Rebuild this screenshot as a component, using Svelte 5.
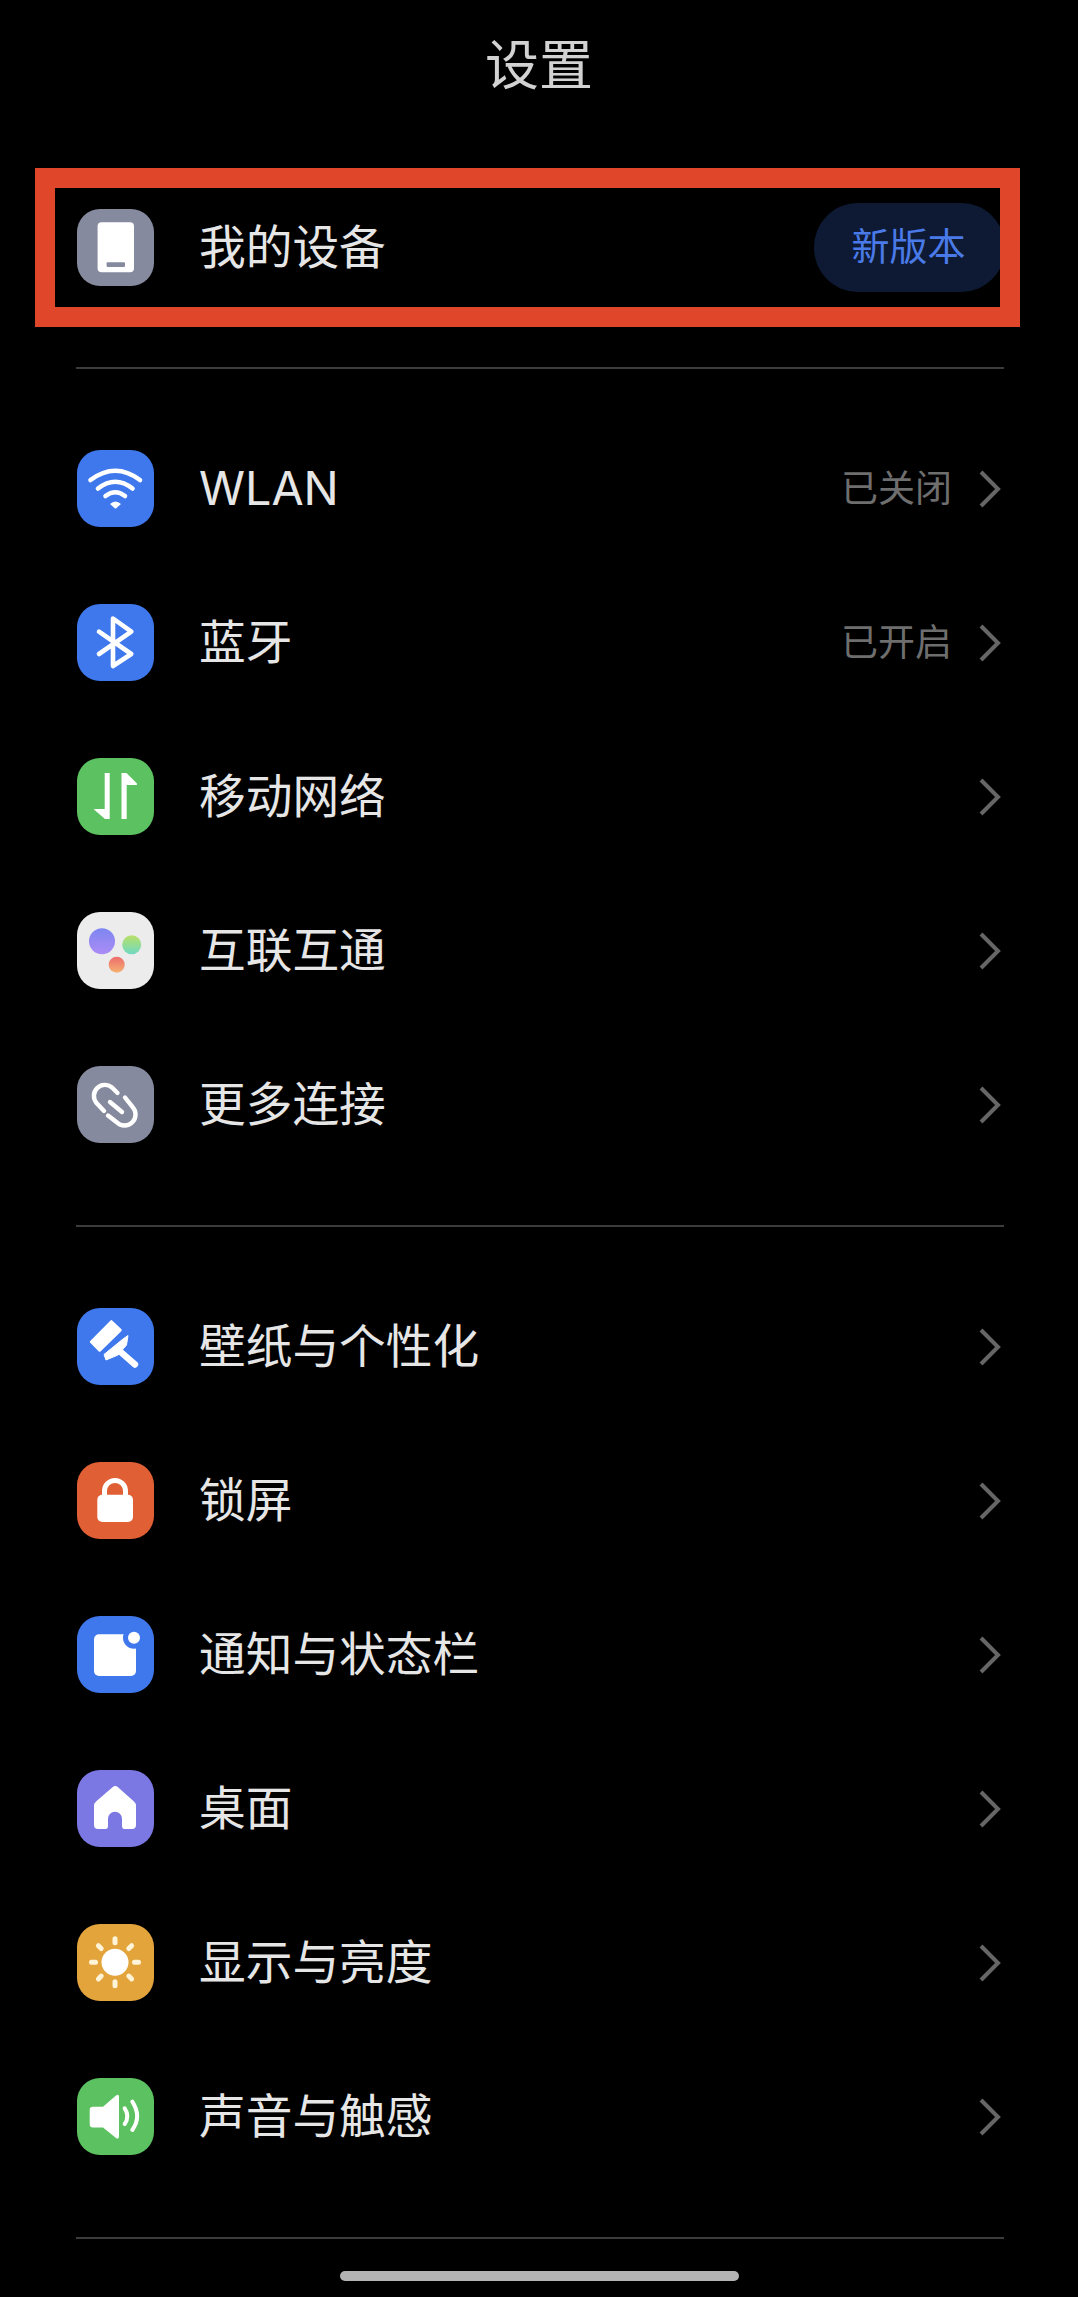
<script>
  const groups = [
    [
      { icon: 'wifi', bg: '#3f78ec', label: 'WLAN', sub: '已关闭' },
      { icon: 'bt', bg: '#3f78ec', label: '蓝牙', sub: '已开启' },
      { icon: 'mobile', bg: '#5cc160', label: '移动网络' },
      { icon: 'link3', bg: '#ececec', label: '互联互通' },
      { icon: 'chain', bg: '#868a9e', label: '更多连接' }
    ],
    [
      { icon: 'brush', bg: '#3f78ec', label: '壁纸与个性化' },
      { icon: 'lock', bg: '#e05f35', label: '锁屏' },
      { icon: 'notify', bg: '#3f78ec', label: '通知与状态栏' },
      { icon: 'home', bg: '#7b78e4', label: '桌面' },
      { icon: 'sun', bg: '#e3a43c', label: '显示与亮度' },
      { icon: 'sound', bg: '#5cc160', label: '声音与触感' }
    ]
  ];

  const rays = [0, 45, 90, 135, 180, 225, 270, 315];
</script>

{#snippet glyph(name)}
  <svg class="glyph" viewBox="0 0 77 77" aria-hidden="true">
    {#if name === 'device'}
      <rect x="20.6" y="13.3" width="36.4" height="50" rx="4" fill="#fff" />
      <rect x="29.6" y="53.3" width="18.4" height="4.6" rx="1" fill="#868a9e" />
    {:else if name === 'wifi'}
      <g fill="none" stroke="#fff" stroke-width="4.6" stroke-linecap="round">
        <path d="M13.5 30Q38.3 11.5 63 30" />
        <path d="M21 38.5Q38.3 25 55.5 38.5" />
        <path d="M28.5 46Q38.3 38.5 48 46" />
      </g>
      <path d="M33 54Q38.5 49 44 54L39.5 58Q38.5 59 37.5 58Z" fill="#fff" />
    {:else if name === 'bt'}
      <path d="M36 62V14.5L54.3 27.7L22 50M22 27.7L54.3 50L36 62" fill="none" stroke="#fff" stroke-width="4.6" stroke-linecap="round" stroke-linejoin="round" />
    {:else if name === 'mobile'}
      <path d="M27.7 15H32.7V61H28L17 51.5V51H27.7Z" fill="#fff" />
      <path d="M44.5 61H49.7V27H60V25.5L49.5 15H44.5Z" fill="#fff" />
    {:else if name === 'link3'}
      <defs>
        <linearGradient id="dot-a" x1="0" y1="0" x2="0" y2="1"><stop offset="0" stop-color="#7d86f0" /><stop offset="1" stop-color="#ac8cf6" /></linearGradient>
        <linearGradient id="dot-b" x1="0" y1="0" x2="0" y2="1"><stop offset="0" stop-color="#b8e066" /><stop offset="1" stop-color="#6fd9c2" /></linearGradient>
        <linearGradient id="dot-c" x1="0" y1="0" x2="0" y2="1"><stop offset="0" stop-color="#ee6a6c" /><stop offset="1" stop-color="#f5b272" /></linearGradient>
      </defs>
      <circle cx="25" cy="29.3" r="13" fill="url(#dot-a)" />
      <circle cx="54.7" cy="32.7" r="9.5" fill="url(#dot-b)" />
      <circle cx="39.7" cy="52.7" r="8" fill="url(#dot-c)" />
    {:else if name === 'chain'}
      <g fill="none" stroke="#fff" stroke-width="4.4" stroke-linecap="round" stroke-linejoin="round">
        <path d="M40.5 27L35 21.5A11 11 0 0 0 19.5 37L27 45" />
        <path d="M31 49.5L39.7 56.3A11 11 0 0 0 55.3 40.7L48 31.5" />
        <path d="M33 36L45 46" />
      </g>
    {:else if name === 'brush'}
      <path d="M13 33.3L33.5 12.5Q34.3 11.7 35.2 12.5L44.5 21.2Q45 22 44.5 23L23.5 43.5Q22.7 44 21.8 43.5L13 34.5Q12.5 34 13 33.3Z" fill="#fff" />
      <path d="M27 46.5L46 31L51 27.5L49.5 37L41 47L29 52Z" fill="#fff" stroke="#fff" stroke-linejoin="round" />
      <path d="M41 41.7L58 56.5" stroke="#fff" stroke-width="6.4" stroke-linecap="round" />
    {:else if name === 'lock'}
      <rect x="20.3" y="32.7" width="35.7" height="27.3" rx="5" fill="#fff" />
      <path d="M27.5 35V29A10.5 10.5 0 0 1 48.5 29V35" fill="none" stroke="#fff" stroke-width="5" />
    {:else if name === 'notify'}
      <rect x="17" y="18.3" width="42" height="41.7" rx="5" fill="#fff" />
      <circle cx="57" cy="21.7" r="11" fill="#3f78ec" />
      <circle cx="57" cy="21.7" r="6" fill="#fff" />
    {:else if name === 'home'}
      <path fill-rule="evenodd" d="M35.5 17.2Q38.3 15 41 17.2L57 31.5Q59 33.3 59 36V55Q59 59 55 59H47.5Q45 59 45 56V48.7A7 7 0 0 0 31 48.7V56Q31 59 28.5 59H21Q17 59 17 55V36Q17 33.3 19 31.5Z" fill="#fff" />
    {:else if name === 'sun'}
      <circle cx="38" cy="38.3" r="13.5" fill="#fff" />
      {#each rays as a}
        <path d="M38 18.8V14.8" transform="rotate({a} 38 38.3)" stroke="#fff4d8" stroke-width="5" stroke-linecap="round" />
      {/each}
    {:else if name === 'sound'}
      <path d="M16 28.7H26L39 17.5Q42 15.5 42 19V58Q42 62 39 60L26 49.5H16Q12.7 49.5 12.7 46V32Q12.7 28.7 16 28.7Z" fill="#fff" />
      <g fill="none" stroke="#fff" stroke-width="4" stroke-linecap="round">
        <path d="M47.7 30.3Q53 38.5 47.7 46" />
        <path d="M55.3 23.7Q65 38.5 55.3 52" />
      </g>
    {/if}
  </svg>
{/snippet}

{#snippet chevron()}
  <svg class="chevron" viewBox="0 0 22 38" aria-hidden="true">
    <path d="M2 2L19 19L2 36" fill="none" stroke="#666" stroke-width="4" />
  </svg>
{/snippet}

<main class="page">
  <h1 class="title">设置</h1>

  <section class="device">
    <div class="icon" style="background: #868a9e">{@render glyph('device')}</div>
    <span class="label">我的设备</span>
    <span class="pill">新版本</span>
  </section>

  {#each groups as rows}
    <div class="group">
      {#each rows as row}
        <div class="row">
          <div class="icon" style="background: {row.bg}">{@render glyph(row.icon)}</div>
          <span class="label">{row.label}</span>
          {#if row.sub}<span class="sub">{row.sub}</span>{/if}
          {@render chevron()}
        </div>
      {/each}
    </div>
  {/each}

  <footer class="footer">
    <div class="home-bar"></div>
  </footer>
</main>

<style>
  :global(body) {
    background: #000;
  }

  .page {
    width: 1078px;
    height: 2297px;
    background: #000;
    overflow: hidden;
    font-family: Inter, "Noto Sans CJK SC", sans-serif;
  }

  .title {
    margin: 0 0 37px;
    height: 131px;
    line-height: 131px;
    text-align: center;
    font-size: 54px;
    font-weight: 400;
    color: #d2d2d2;
  }

  .device {
    box-sizing: border-box;
    display: flex;
    align-items: center;
    width: 985px;
    height: 159px;
    margin: 0 0 0 35px;
    padding-left: 22px;
    border: 20px solid #e0462a;
    overflow: hidden;
  }

  .icon {
    flex: none;
    width: 77px;
    height: 77px;
    border-radius: 23px;
  }

  .glyph {
    display: block;
    width: 77px;
    height: 77px;
  }

  .label {
    flex: 1;
    margin-left: 45px;
    font-size: 46.7px;
    line-height: 77px;
    color: #e6e6e6;
  }

  .pill {
    flex: none;
    box-sizing: border-box;
    width: 191px;
    height: 89px;
    margin-right: -5px;
    padding-right: 2px;
    border-radius: 44px;
    background: #0e1a33;
    color: #4a7ae8;
    font-size: 38px;
    line-height: 87px;
    text-align: center;
  }

  .group {
    display: flex;
    flex-direction: column;
    gap: 77px;
    margin: 40px 74px 0 76px;
    padding: 81px 0 0;
    border-top: 2px solid #3c3c3c;
  }

  .group + .group {
    margin-top: 82px;
  }

  .row {
    display: flex;
    align-items: center;
    height: 77px;
    padding-left: 1px;
  }

  .sub {
    margin: 0 27px 5px 0;
    font-size: 37px;
    color: #6e6e6e;
  }

  .chevron {
    flex: none;
    width: 22px;
    height: 38px;
    margin-right: 3px;
  }

  .footer {
    margin: 82px 74px 0 76px;
    padding-top: 32px;
    border-top: 2px solid #3c3c3c;
  }

  .home-bar {
    width: 399px;
    height: 10px;
    margin-left: 264px;
    border-radius: 5px;
    background: #b4b4b4;
  }
</style>
